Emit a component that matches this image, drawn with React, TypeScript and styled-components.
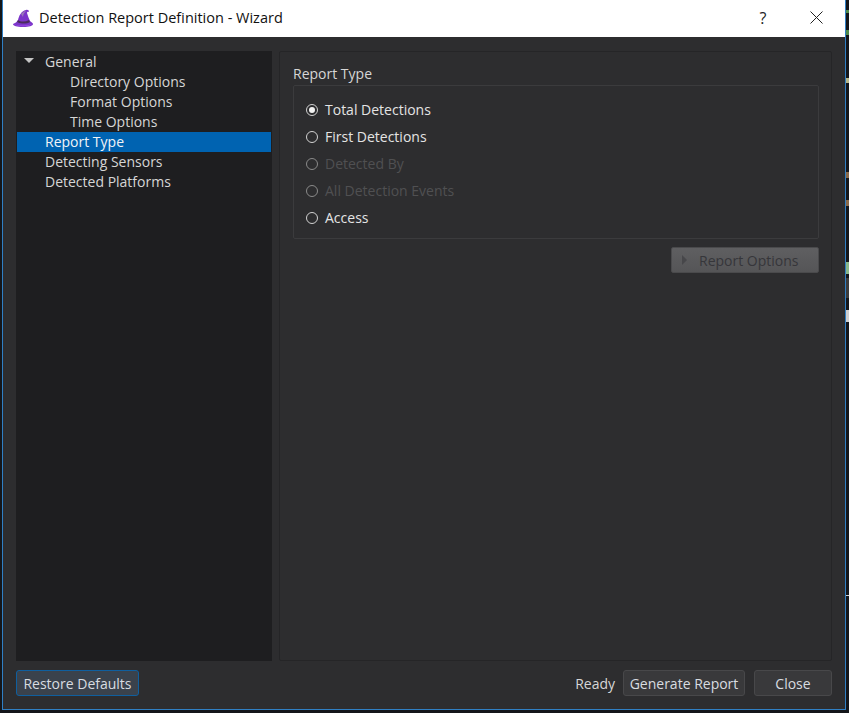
import React from 'react';
import styled, { createGlobalStyle } from 'styled-components';

const GlobalStyle = createGlobalStyle`
  html, body {
    margin: 0;
    padding: 0;
    background: #14161a;
  }
  * {
    box-sizing: border-box;
  }
`;

const Desktop = styled.div`
  position: relative;
  width: 849px;
  height: 713px;
  padding: 0 3px 3px 2px;
  overflow: hidden;
  background: #14161a;
  font-family: 'Open Sans', 'Noto Sans', sans-serif;
`;

const Leftovers = styled.svg`
  position: absolute;
  top: 0;
  right: 0;
  width: 3px;
  height: 713px;
`;

const Window = styled.div`
  display: flex;
  flex-direction: column;
  width: 844px;
  height: 710px;
  border: 1px solid #2f7fc4;
  border-top: 0;
  background: #2d2d2f;
`;

const TitleBar = styled.div`
  display: flex;
  align-items: center;
  flex: none;
  height: 37px;
  padding: 0 0 2px 9px;
  background: #fff;
  color: #111;
  font-size: 14.5px;
`;

const TitleText = styled.span`
  flex: 1;
  margin-left: 5px;
`;

const HelpMark = styled.span`
  width: 16px;
  margin-right: 39px;
  font-size: 16px;
  text-align: center;
  color: #222;
`;

const CloseMark = styled.svg`
  width: 13px;
  height: 13px;
  margin-right: 22px;
`;

const Content = styled.div`
  display: flex;
  flex: 1;
  gap: 7px;
  min-height: 0;
  padding: 14px 13px 0 13px;
`;

const TreePanel = styled.div`
  width: 256px;
  padding: 1px;
  background: #1e1e20;
`;

const TreeRow = styled.div<{ $indent: number; $selected?: boolean }>`
  position: relative;
  height: 20px;
  padding-left: ${p => p.$indent}px;
  background: ${p => (p.$selected ? '#0063b1' : 'transparent')};
  color: ${p => (p.$selected ? '#f0f4f8' : '#d6d6d6')};
  font-size: 14px;
  line-height: 20px;
  white-space: nowrap;
`;

const Caret = styled.span`
  position: absolute;
  top: 6px;
  left: 7px;
  border-style: solid;
  border-width: 5px 5px 0;
  border-color: #c4c4c4 transparent transparent;
`;

const SettingsPanel = styled.div`
  display: flex;
  flex: 1;
  flex-direction: column;
  padding: 12px 12px 0 13px;
  border: 1px solid #252527;
  border-radius: 2px;
`;

const GroupTitle = styled.div`
  height: 21px;
  color: #d6d6d6;
  font-size: 14px;
  line-height: 19px;
`;

const GroupBox = styled.div`
  display: flex;
  flex-direction: column;
  height: 154px;
  padding: 10px 0 0 12px;
  border: 1px solid #3b3b3d;
  border-radius: 2px;
`;

const RadioRow = styled.div<{ $disabled?: boolean }>`
  display: flex;
  align-items: center;
  gap: 7px;
  height: 27px;
  color: ${p => (p.$disabled ? '#505052' : '#e4e4e4')};
  font-size: 14px;
`;

const RadioMark = styled.span<{ $checked?: boolean; $disabled?: boolean }>`
  display: flex;
  align-items: center;
  justify-content: center;
  width: 12px;
  height: 12px;
  border: 1px solid ${p => (p.$disabled ? '#8a8a8a' : '#d2d2d2')};
  border-radius: 50%;

  &::after {
    content: '';
    display: ${p => (p.$checked ? 'block' : 'none')};
    width: 6px;
    height: 6px;
    border-radius: 50%;
    background: #f2f2f2;
  }
`;

const OptionsRow = styled.div`
  display: flex;
  justify-content: flex-end;
  margin-top: 8px;
`;

const OptionsButton = styled.div`
  display: flex;
  align-items: center;
  width: 148px;
  height: 26px;
  padding-left: 10px;
  border: 1px solid #4a4a4c;
  border-radius: 2px;
  background: linear-gradient(#5f5f61, #555557);
  color: #36363a;
  font-size: 14px;
`;

const OptionsArrow = styled.span`
  margin-right: 12px;
  border-style: solid;
  border-width: 5px 0 5px 5px;
  border-color: transparent transparent transparent #47474a;
`;

const Footer = styled.div`
  display: flex;
  align-items: center;
  flex: none;
  height: 48px;
  padding: 0 13px 4px 13px;
`;

const FooterButton = styled.div<{ $width: number; $focused?: boolean }>`
  display: flex;
  align-items: center;
  justify-content: center;
  width: ${p => p.$width}px;
  height: 26px;
  border: 1px solid ${p => (p.$focused ? '#0f5f9f' : '#48484a')};
  border-radius: 3px;
  background: ${p => (p.$focused ? '#3a424c' : '#39393b')};
  color: #d8dce0;
  font-size: 14px;
`;

const Spacer = styled.div`
  flex: 1;
`;

const Status = styled.span`
  margin-right: 8px;
  color: #d6d6d6;
  font-size: 14px;
`;

const CloseButton = styled(FooterButton)`
  margin-left: 9px;
`;

const treeItems = [
  { label: 'General', indent: 28, caret: true },
  { label: 'Directory Options', indent: 53 },
  { label: 'Format Options', indent: 53 },
  { label: 'Time Options', indent: 53 },
  { label: 'Report Type', indent: 28, selected: true },
  { label: 'Detecting Sensors', indent: 28 },
  { label: 'Detected Platforms', indent: 28 },
];

const reportTypes = [
  { label: 'Total Detections', checked: true },
  { label: 'First Detections' },
  { label: 'Detected By', disabled: true },
  { label: 'All Detection Events', disabled: true },
  { label: 'Access' },
];

function WizardHat() {
  return (
    <svg width="22" height="20" viewBox="0 0 22 20" aria-hidden="true">
      <path d="M1 16c2-1 4-2 5-4 1-4 3-9 8-10 2-.5 3 .5 3 2-1-.5-2 0-2 1 1 3 2 6 3 8 1 1 3 2 3 3 0 2-4 3-10 3-6 0-10-1-10-3z" fill="#7b35c9" />
      <path d="M6 12c3 2 7 2 11 0l1 2c-3 2-9 2-13 0z" fill="#4a2a5e" />
      <path d="M9 6c1-1 3-3 5-3-1 1-3 3-3 6z" fill="#9b79b8" />
      <path d="M2 16c4 2 12 2 18 0-3 3-15 3-18 0z" fill="#a34df0" />
    </svg>
  );
}

export default function App() {
  return (
    <>
      <GlobalStyle />
      <Desktop>
        <Window>
          <TitleBar>
            <WizardHat />
            <TitleText>Detection Report Definition - Wizard</TitleText>
            <HelpMark>?</HelpMark>
            <CloseMark viewBox="0 0 13 13">
              <path d="M.5.5l12 12M12.5.5l-12 12" stroke="#222" strokeWidth="1" fill="none" />
            </CloseMark>
          </TitleBar>
          <Content>
            <TreePanel>
              {treeItems.map(item => (
                <TreeRow key={item.label} $indent={item.indent} $selected={item.selected}>
                  {item.caret && <Caret />}
                  {item.label}
                </TreeRow>
              ))}
            </TreePanel>
            <SettingsPanel>
              <GroupTitle>Report Type</GroupTitle>
              <GroupBox>
                {reportTypes.map(item => (
                  <RadioRow key={item.label} $disabled={item.disabled}>
                    <RadioMark $checked={item.checked} $disabled={item.disabled} />
                    {item.label}
                  </RadioRow>
                ))}
              </GroupBox>
              <OptionsRow>
                <OptionsButton>
                  <OptionsArrow />
                  Report Options
                </OptionsButton>
              </OptionsRow>
            </SettingsPanel>
          </Content>
          <Footer>
            <FooterButton $width={123} $focused>
              Restore Defaults
            </FooterButton>
            <Spacer />
            <Status>Ready</Status>
            <FooterButton $width={122}>Generate Report</FooterButton>
            <CloseButton $width={78}>Close</CloseButton>
          </Footer>
        </Window>
        <Leftovers viewBox="0 0 3 713">
          <rect y="10" width="3" height="3" fill="#4f8a4a" />
          <rect y="30" width="3" height="5" fill="#4f8a4a" />
          <rect y="78" width="3" height="5" fill="#b8b88a" />
          <rect y="172" width="3" height="6" fill="#8a6a4a" />
          <rect y="200" width="3" height="6" fill="#8a6a4a" />
          <rect y="262" width="3" height="12" fill="#8ab88a" />
          <rect y="278" width="3" height="20" fill="#3c3c3c" />
          <rect y="310" width="3" height="12" fill="#cfcfcf" />
          <rect y="595" width="3" height="1" fill="#cfcfcf" />
        </Leftovers>
      </Desktop>
    </>
  );
}
